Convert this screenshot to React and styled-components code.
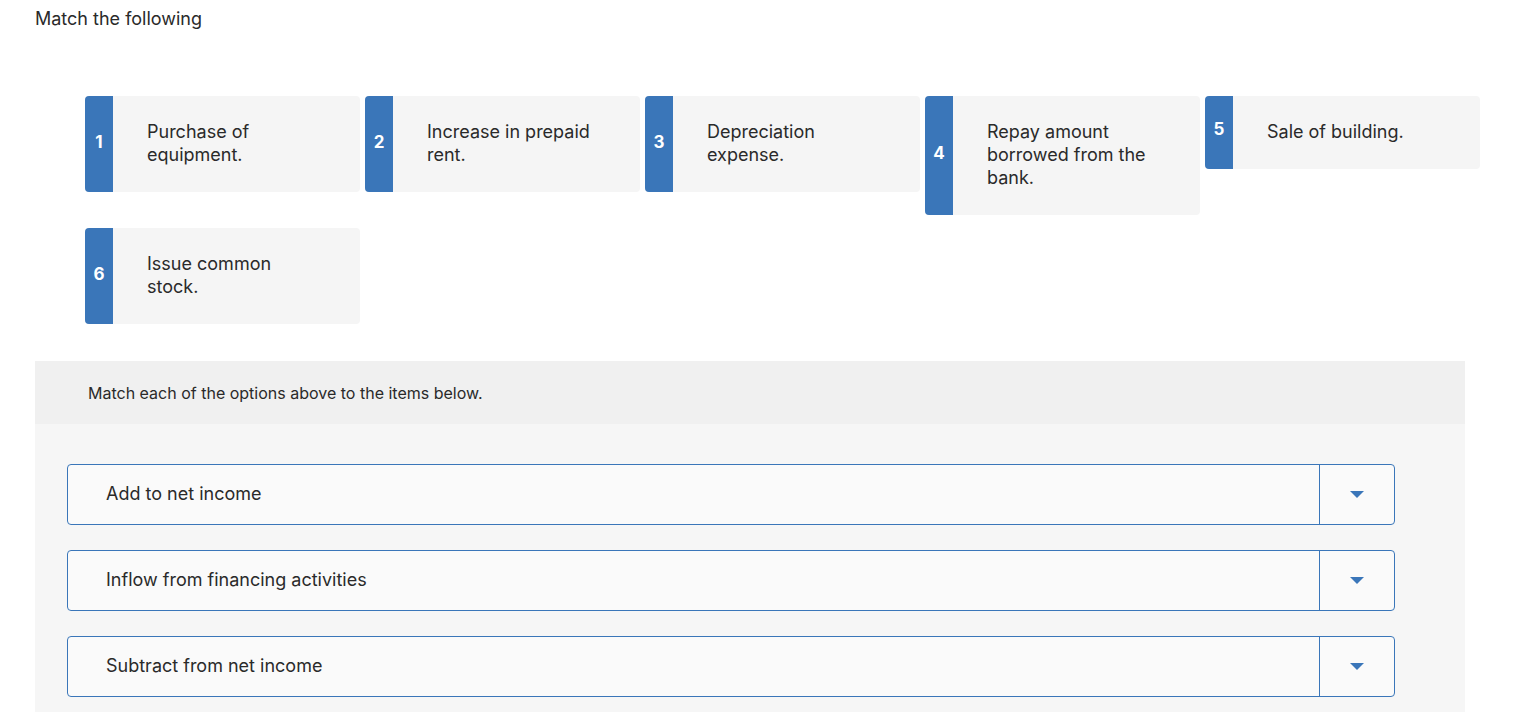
import React from "react";
import styled, { createGlobalStyle } from "styled-components";

const GlobalStyle = createGlobalStyle`
  body {
    margin: 0;
    background: #ffffff;
    font-family: Inter, "Liberation Sans", sans-serif;
    color: #2a2a2a;
  }
`;

const Page = styled.div`
  padding: 7px 35px 0 35px;
`;

const Title = styled.div`
  font-size: 18px;
  line-height: 24px;
`;

const Options = styled.div`
  display: flex;
  flex-wrap: wrap;
  align-items: flex-start;
  column-gap: 5px;
  row-gap: 13px;
  padding: 65px 0 0 50px;
  width: 1400px;
`;

const Card = styled.div`
  display: flex;
  width: 275px;
  background: #f5f5f5;
  border-radius: 4px;
  overflow: hidden;
`;

const Badge = styled.div`
  flex: 0 0 28px;
  background: #3a76b9;
  color: #ffffff;
  font-weight: 700;
  font-size: 17px;
  display: flex;
  align-items: ${(p) => (p.top ? "flex-start" : "center")};
  padding-top: ${(p) => (p.top ? "23px" : "0")};
  padding-bottom: ${(p) => (p.top ? "0" : "5px")};
  justify-content: center;
`;

const CardText = styled.div`
  padding: 24px 16px 26px 34px;
  font-size: 18px;
  line-height: 23px;
`;

const Panel = styled.div`
  margin-top: 37px;
  width: 1430px;
  background: #f6f6f6;
`;

const PanelHead = styled.div`
  background: #f0f0f0;
  height: 63px;
  padding-left: 53px;
  display: flex;
  align-items: center;
  font-size: 16px;
`;

const PanelBody = styled.div`
  padding: 40px 70px 20px 32px;
  display: flex;
  flex-direction: column;
  gap: 25px;
`;

const Select = styled.div`
  display: flex;
  height: 61px;
  box-sizing: border-box;
  border: 1px solid #3a76b9;
  border-radius: 4px;
  background: #fafafa;
`;

const SelectLabel = styled.div`
  flex: 1;
  display: flex;
  align-items: center;
  padding: 0 0 2px 38px;
  font-size: 18px;
`;

const Arrow = styled.div`
  flex: 0 0 74px;
  border-left: 1px solid #3a76b9;
  display: flex;
  align-items: center;
  justify-content: center;
`;

const options = [
  { n: 1, lines: ["Purchase of", "equipment."] },
  { n: 2, lines: ["Increase in prepaid", "rent."] },
  { n: 3, lines: ["Depreciation", "expense."] },
  { n: 4, lines: ["Repay amount", "borrowed from the", "bank."] },
  { n: 5, lines: ["Sale of building."], top: true },
  { n: 6, lines: ["Issue common", "stock."] },
];

const items = [
  "Add to net income",
  "Inflow from financing activities",
  "Subtract from net income",
];

function Caret() {
  return (
    <svg width="14" height="8" viewBox="0 0 14 8">
      <path d="M0 0 H14 L7 7 Z" fill="#3a76b9" />
    </svg>
  );
}

export default function App() {
  return (
    <Page>
      <GlobalStyle />
      <Title>Match the following</Title>
      <Options>
        {options.map((o) => (
          <Card key={o.n}>
            <Badge top={o.top}>{o.n}</Badge>
            <CardText>
              {o.lines.map((l, i) => (
                <div key={i}>{l}</div>
              ))}
            </CardText>
          </Card>
        ))}
      </Options>
      <Panel>
        <PanelHead>Match each of the options above to the items below.</PanelHead>
        <PanelBody>
          {items.map((t) => (
            <Select key={t}>
              <SelectLabel>{t}</SelectLabel>
              <Arrow>
                <Caret />
              </Arrow>
            </Select>
          ))}
        </PanelBody>
      </Panel>
    </Page>
  );
}
